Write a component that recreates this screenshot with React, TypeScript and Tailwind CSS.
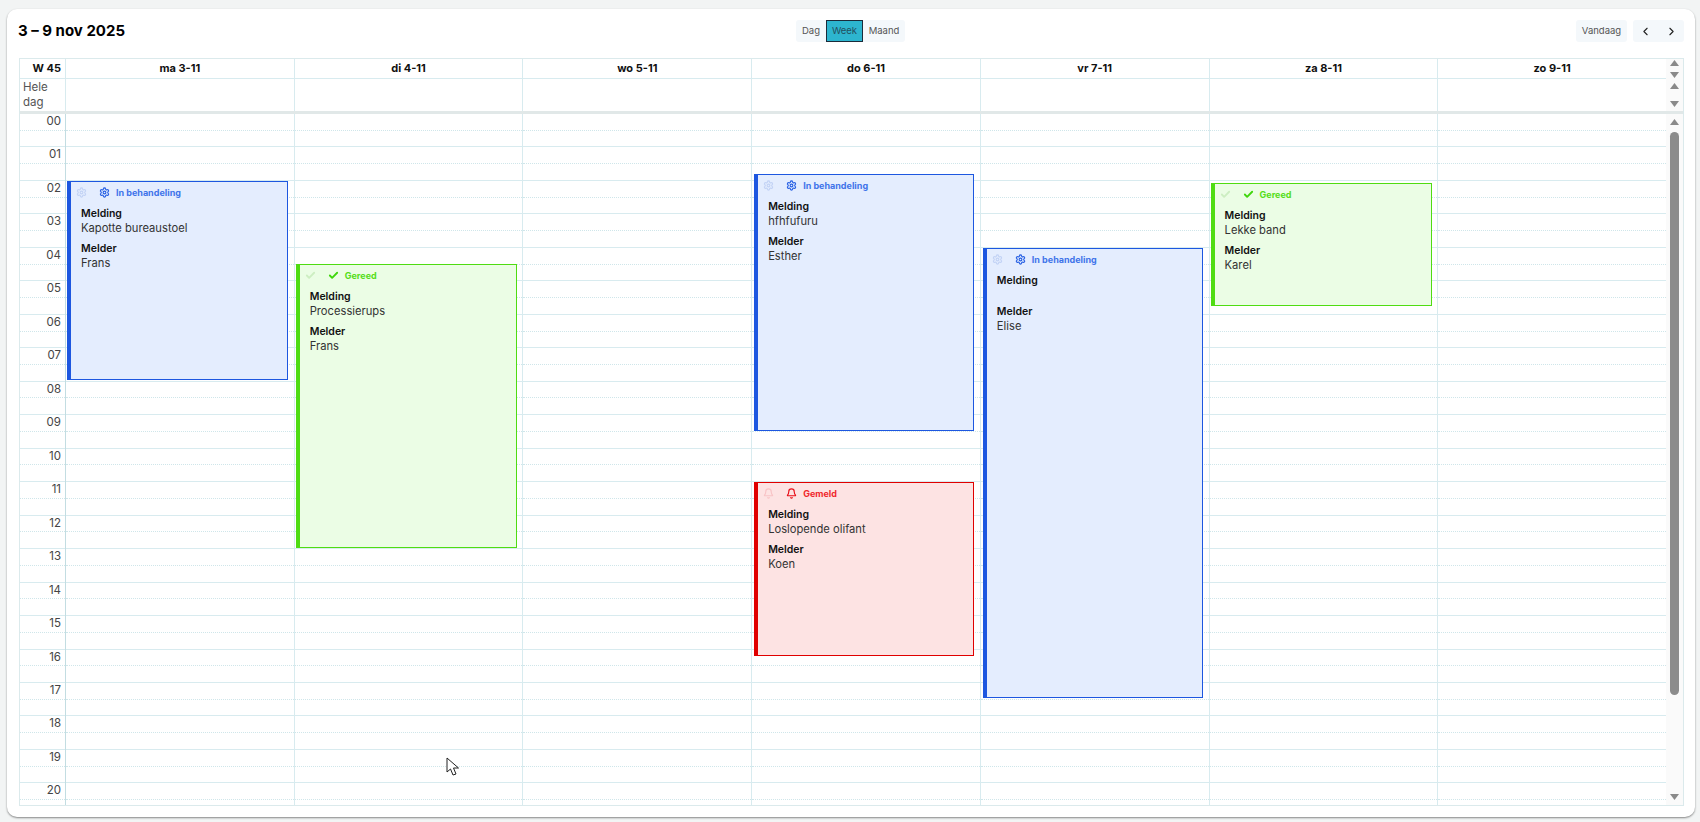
import { Check, ChevronLeft, ChevronRight, Settings, Bell } from "lucide-react";

const days = ["ma 3-11", "di 4-11", "wo 5-11", "do 6-11", "vr 7-11", "za 8-11", "zo 9-11"];
const hours = Array.from({ length: 21 }, (_, i) => String(i).padStart(2, "0"));

type Status = "blue" | "green" | "red";
const styles: Record<Status, { box: string; label: string; icon: string; faint: string; text: string }> = {
  blue: { box: "bg-[#e4edfe] border-[#1d57e0]", label: "text-[#3f74ea]", icon: "text-[#2a62e4]", faint: "text-[#c3d3f5]", text: "In behandeling" },
  green: { box: "bg-[#ebfde5] border-[#4fdc12]", label: "text-[#55de1a]", icon: "text-[#3fd60c]", faint: "text-[#cdeec2]", text: "Gereed" },
  red: { box: "bg-[#fde3e3] border-[#e00000]", label: "text-[#f0282d]", icon: "text-[#e8101a]", faint: "text-[#f8c4c6]", text: "Gemeld" },
};

type Ev = { day: number; top: number; height: number; left: number; width: number; status: Status; melding: string; melder: string };
const events: Ev[] = [
  { day: 0, top: 67, height: 199, left: 2, width: 221, status: "blue", melding: "Kapotte bureaustoel", melder: "Frans" },
  { day: 1, top: 150, height: 284, left: 2, width: 221, status: "green", melding: "Processierups", melder: "Frans" },
  { day: 3, top: 60, height: 257, left: 3, width: 220, status: "blue", melding: "hfhfufuru", melder: "Esther" },
  { day: 3, top: 368, height: 174, left: 3, width: 220, status: "red", melding: "Loslopende olifant", melder: "Koen" },
  { day: 4, top: 134, height: 450, left: 3, width: 220, status: "blue", melding: "", melder: "Elise" },
  { day: 5, top: 69, height: 123, left: 2, width: 221, status: "green", melding: "Lekke band", melder: "Karel" },
];

function Triangle({ up }: { up?: boolean }) {
  return (
    <svg width="9" height="6" viewBox="0 0 9 6" className="block">
      <path d={up ? "M4.5 0 L9 6 L0 6 Z" : "M0 0 L9 0 L4.5 6 Z"} fill="#8a8a8a" />
    </svg>
  );
}

function StatusIcon({ status, className }: { status: Status; className: string }) {
  if (status === "green") return <Check size={11} strokeWidth={4} className={className} />;
  if (status === "red") return <Bell size={11} strokeWidth={2.5} className={className} />;
  return <Settings size={11} strokeWidth={2.5} className={className} />;
}

function EventCard({ ev }: { ev: Ev }) {
  const s = styles[ev.status];
  return (
    <div
      className={`absolute border border-l-4 ${s.box}`}
      style={{ top: ev.top, height: ev.height, left: ev.left, width: ev.width }}
    >
      <div className="flex items-center h-[13px] mt-[4px] ml-[5px]">
        <StatusIcon status={ev.status} className={s.faint} />
        <StatusIcon status={ev.status} className={`${s.icon} ml-[12px]`} />
        <span className={`ml-[6px] text-[9px] font-bold leading-[13px] ${s.label}`}>{s.text}</span>
      </div>
      <div className="pl-[10px] pt-[8px]">
        <div className="text-[10.5px] font-semibold leading-[14px] text-[#111]">Melding</div>
        <div className={`text-[11.2px] leading-[15px] text-[#333] ${ev.melding ? "h-[15px]" : "h-[11px]"}`}>{ev.melding}</div>
        <div className="text-[10.5px] font-semibold leading-[14px] text-[#111] mt-[6px]">Melder</div>
        <div className="text-[11.2px] leading-[15px] text-[#333]">{ev.melder}</div>
      </div>
    </div>
  );
}

const cols = "grid grid-cols-[45px_repeat(7,minmax(0,1fr))]";

export default function App() {
  return (
    <div className="h-[822px] overflow-hidden bg-[#f2f4f4] pt-[9px] px-[7px] font-['Inter','Liberation_Sans',sans-serif]">
      <div className="relative h-[808px] w-[1688px] rounded-[10px] bg-white shadow-[0_1px_2px_rgba(0,0,0,0.45)] px-[12px]">
        <div className="relative flex h-[49px] w-[1665px] items-start justify-between pt-[11px]">
          <h1 className="-ml-px text-[15px] font-bold leading-[22px] text-black">3 – 9 nov 2025</h1>
          <div className="absolute left-[777px] top-[11px] flex h-[22px] rounded-[3px] bg-[#f4f8fb] text-[9.5px] text-[#555]">
            <button className="w-[30px] leading-[22px]">Dag</button>
            <button className="w-[37px] border border-[#1b2b3a] bg-[#2db5cf] leading-[20px] text-[#22505f]">Week</button>
            <button className="w-[42px] leading-[22px]">Maand</button>
          </div>
          <div className="flex gap-[6px] text-[9.5px] text-[#555]">
            <button className="h-[22px] w-[51px] rounded-[3px] bg-[#f4f8fb] leading-[22px]">Vandaag</button>
            <div className="flex h-[22px] w-[51px] items-center justify-between rounded-[3px] bg-[#f4f8fb] px-[6px] text-[#222]">
              <ChevronLeft size={13} strokeWidth={2} />
              <ChevronRight size={13} strokeWidth={2} />
            </div>
          </div>
        </div>

        <div className="w-[1665px] border border-[#dbeaec]">
          <div className="flex border-b-[3px] border-[#e1e8e8]">
            <div className="flex-1 min-w-0">
              <div className={`${cols} h-[20px] border-b border-[#d8ebef]`}>
                <div className="pr-[4px] text-right text-[11px] font-bold leading-[18px] text-[#111]">W 45</div>
                {days.map((d) => (
                  <div key={d} className="border-l border-[#d8ebef] text-center text-[11px] font-bold leading-[18px] text-[#111]">{d}</div>
                ))}
              </div>
              <div className={`${cols} h-[32px]`}>
                <div className="pl-[3px] pt-[1px] text-[11.5px] leading-[15px] text-[#555]">Hele<br />dag</div>
                {days.map((d) => (
                  <div key={d} className="border-l border-[#d8ebef]" />
                ))}
              </div>
            </div>
            <div className="w-[17px] shrink-0 bg-[#fafafa] flex flex-col items-center">
              <div className="mt-[1px]"><Triangle up /></div>
              <div className="mt-[6px]"><Triangle /></div>
              <div className="mt-[5px]"><Triangle up /></div>
              <div className="mt-[12px]"><Triangle /></div>
            </div>
          </div>

          <div className="flex h-[691px] overflow-hidden">
            <div className="relative flex-1 min-w-0 h-full overflow-hidden">
              {hours.map((h) => (
                <div key={h} className={`${cols} h-[33.47px]`}>
                  <div className="relative">
                    <div className="h-1/2 border-b border-dotted border-[#cfe6ea] pr-[4px] text-right text-[11.5px] leading-[14px] text-[#444]">{h}</div>
                    <div className="h-1/2 border-b border-[#d8ebef]" />
                  </div>
                  {days.map((d, i) => (
                    <div key={d} className={`border-l ${i === 0 ? "border-[#c3dde2]" : "border-[#d8ebef]"}`}>
                      <div className="h-1/2 border-b border-dotted border-[#cfe6ea]" />
                      <div className="h-1/2 border-b border-[#d8ebef]" />
                    </div>
                  ))}
                </div>
              ))}
              <div className={`${cols} absolute inset-0`}>
                <div />
                {days.map((d, i) => (
                  <div key={d} className="relative">
                    {events.filter((e) => e.day === i).map((e) => (
                      <EventCard key={e.top} ev={e} />
                    ))}
                  </div>
                ))}
              </div>
              <svg width="16" height="20" viewBox="0 0 16 20" className="absolute left-[426px] top-[643px]">
                <path d="M1 1 L1 15 L4.5 12 L7 18 L10 17 L7.5 11 L12.5 11 Z" fill="#fff" stroke="#222" strokeWidth="1" strokeLinejoin="round" />
              </svg>
            </div>
            <div className="flex w-[17px] shrink-0 flex-col items-center bg-[#fafafa] pt-[5px] pb-[5px]">
              <Triangle up />
              <div className="mt-[7px] h-[563px] w-[9px] rounded-[5px] bg-[#8c8c8c]" />
              <div className="mt-auto"><Triangle /></div>
            </div>
          </div>
        </div>
      </div>
    </div>
  );
}
